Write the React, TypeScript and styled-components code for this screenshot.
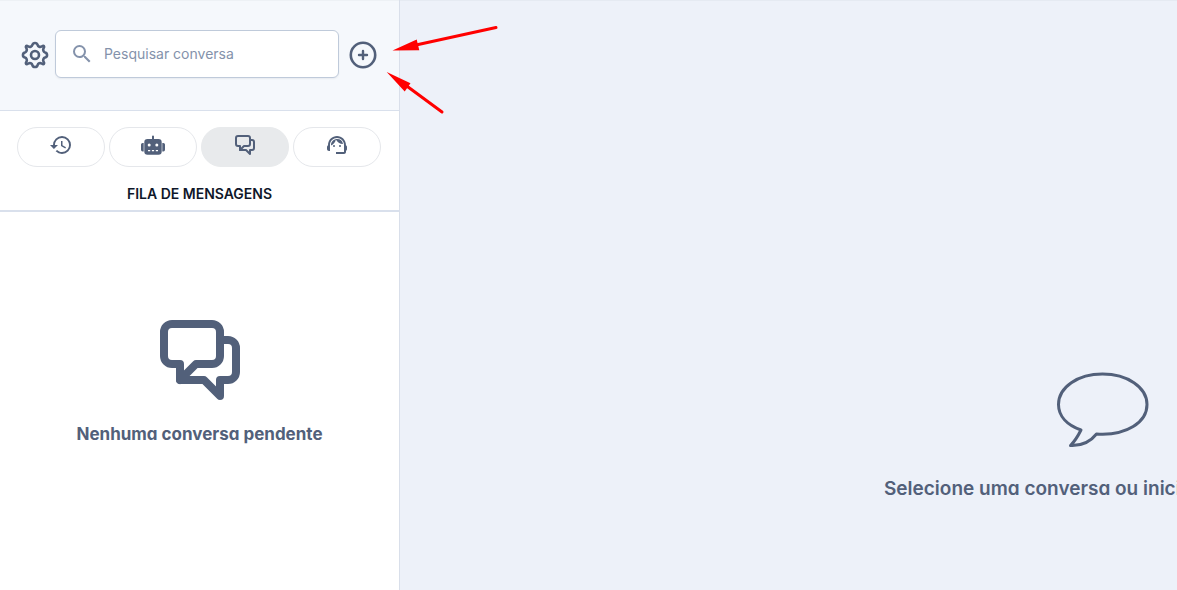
import React from "react";
import styled, { createGlobalStyle } from "styled-components";
import { MdSearch, MdHistory, MdOutlineSupportAgent } from "react-icons/md";

const GlobalStyle = createGlobalStyle`
  *, *::before, *::after { box-sizing: border-box; }
  body { margin: 0; font-family: Inter, "Liberation Sans", sans-serif; color: #0f172a; }
  button { font: inherit; cursor: pointer; }
`;

const Page = styled.div`
  display: flex;
  min-height: 100vh;
  overflow: hidden;
  position: relative;
`;

const Sidebar = styled.aside`
  flex: 0 0 400px;
  border-right: 1px solid #d9dfea;
  background: #fff;
  display: flex;
  flex-direction: column;
`;

const SearchHeader = styled.header`
  display: flex;
  align-items: center;
  padding: 30px 21px 32px 20px;
  background: #f5f8fc;
  border-bottom: 1px solid #d9e0ec;
  box-shadow: inset 0 1px 0 rgba(15, 23, 42, 0.03);
`;

const IconButton = styled.button`
  display: flex;
  padding: 2px 0 0;
  border: 0;
  background: none;
  color: #52607a;
`;

const SearchField = styled.label`
  flex: 1;
  min-width: 0;
  height: 48px;
  margin: 0 9px 0 5px;
  padding: 0 16px 0 14px;
  display: flex;
  align-items: center;
  gap: 10px;
  background: #fff;
  border: 1px solid #bfcada;
  border-radius: 6px;
  box-shadow: 0 1px 2px rgba(15, 23, 42, 0.06);
  color: #8492ab;
`;

const SearchInput = styled.input`
  flex: 1;
  min-width: 0;
  padding: 0;
  border: 0;
  outline: 0;
  background: none;
  font: 400 14px/20px Inter, "Liberation Sans", sans-serif;
  &::placeholder { color: #8492ab; opacity: 1; }
`;

const Filters = styled.nav`
  display: grid;
  grid-template-columns: repeat(4, 1fr);
  gap: 4px;
  padding: 16px 18px 0 17px;
`;

const FilterButton = styled.button<{ $active?: boolean }>`
  height: 40px;
  display: flex;
  justify-content: center;
  padding: 5px 0 0;
  border: 1px solid ${(p) => (p.$active ? "#e8eaec" : "#e5e7eb")};
  border-radius: 20px;
  background: ${(p) => (p.$active ? "#e8eaec" : "#fff")};
  color: #52607a;
`;

const QueueTitle = styled.h2`
  margin: 0;
  padding: 17px 0 6px;
  border-bottom: 2px solid #d9e0ec;
  text-align: center;
  font-size: 14px;
  line-height: 20px;
  font-weight: 600;
`;

const EmptyQueue = styled.section`
  display: flex;
  flex-direction: column;
  align-items: center;
  padding-top: 100px;
  color: #52607a;
`;

const Message = styled.p<{ $size: number; $weight: number }>`
  margin: 0;
  font-size: ${(p) => p.$size}px;
  line-height: 28px;
  font-weight: ${(p) => p.$weight};
  white-space: nowrap;
  font-feature-settings: "cv11";
`;

const QueueMessage = styled(Message)`
  margin-top: 12px;
`;

const Main = styled.main`
  flex: 1;
  min-width: 0;
  overflow: hidden;
  background: #edf1f9;
  box-shadow: inset 0 1px 0 rgba(15, 23, 42, 0.03);
  color: #52607a;
`;

const Placeholder = styled.section`
  width: max-content;
  display: flex;
  flex-direction: column;
  align-items: flex-start;
  margin: 370px 0 0 484px;
`;

const BubbleIcon = styled.svg`
  margin-left: 171px;
`;

const PlaceholderText = styled(Message)`
  margin-top: 25px;
`;

const Arrows = styled.svg`
  position: absolute;
  left: 380px;
  top: 15px;
  pointer-events: none;
`;

const Gear = () => (
  <svg width="30" height="30" viewBox="0 0 30 30" fill="none" stroke="currentColor" strokeWidth="2.6" strokeLinejoin="round">
    <path d="M12.4 4.9C13.1 2.3 16.9 2.3 17.6 4.9A2.7 2.7 0 0 0 21.6 6.5C23.9 5.1 25 6.2 23.5 8.5A2.7 2.7 0 0 0 25.1 12.4C27.7 13.1 27.7 16.9 25.1 17.6A2.7 2.7 0 0 0 23.5 21.5C25 23.8 23.9 24.9 21.6 23.5A2.7 2.7 0 0 0 17.6 25.1C16.9 27.7 13.1 27.7 12.4 25.1A2.7 2.7 0 0 0 8.4 23.5C6.1 24.9 5 23.8 6.5 21.5A2.7 2.7 0 0 0 4.9 17.6C2.3 16.9 2.3 13.1 4.9 12.4A2.7 2.7 0 0 0 6.5 8.5C5 6.2 6.1 5.1 8.4 6.5A2.7 2.7 0 0 0 12.4 4.9Z" />
    <circle cx="15" cy="15" r="4" />
  </svg>
);

const PlusCircle = () => (
  <svg width="30" height="30" viewBox="0 0 30 30" fill="none" stroke="currentColor" strokeWidth="2.6" strokeLinecap="round">
    <circle cx="15" cy="15" r="12.2" />
    <path d="M15 11v8M11 15h8" strokeWidth="2.4" />
  </svg>
);

const Robot = () => (
  <svg width="24" height="24" viewBox="0 0 24 24" fill="currentColor">
    <path d="M11 3.4a1 1 0 0 1 2 0V6h4.500a3.200 3.200 0 0 1 3.200 3.200v9.300a3.200 3.200 0 0 1-3.200 3.200h-11a3.200 3.200 0 0 1-3.200-3.200V9.200A3.200 3.200 0 0 1 6.500 6H11z" />
    <path d="M2.700 10v8.400H1.600A1.600 1.600 0 0 1 0 16.800v-5.200A1.600 1.600 0 0 1 1.600 10zM21.300 10h1.100a1.600 1.600 0 0 1 1.600 1.600v5.200a1.600 1.600 0 0 1-1.600 1.600h-1.100z" />
    <circle cx="8.200" cy="12" r="1.500" fill="#fff" />
    <circle cx="15.800" cy="12" r="1.500" fill="#fff" />
    <path d="M7 16.900h2.200v1.300H7zM10.900 16.900h2.200v1.300h-2.200zM14.800 16.900H17v1.300h-2.200z" fill="#fff" />
  </svg>
);

const Chats = ({ size }: { size: number }) => (
  <svg width={size} height={size} viewBox="0 0 24 24" fill="none" stroke="currentColor" strokeWidth="2" strokeLinecap="round" strokeLinejoin="round">
    <path d="M7 17v-4H5a2 2 0 0 1-2-2V5a2 2 0 0 1 2-2h10a2 2 0 0 1 2 2v6a2 2 0 0 1-2 2h-4z" />
    <path d="M17 7h2a2 2 0 0 1 2 2v6a2 2 0 0 1-2 2h-2v4l-4-4H7" />
  </svg>
);

export default function App() {
  return (
    <>
      <GlobalStyle />
      <Page>
        <Sidebar>
          <SearchHeader>
            <IconButton aria-label="Configurações"><Gear /></IconButton>
            <SearchField>
              <MdSearch size={24} />
              <SearchInput type="text" placeholder="Pesquisar conversa" aria-label="Pesquisar conversa" />
            </SearchField>
            <IconButton aria-label="Nova conversa"><PlusCircle /></IconButton>
          </SearchHeader>
          <Filters>
            <FilterButton aria-label="Histórico"><MdHistory size={24} /></FilterButton>
            <FilterButton aria-label="Robô"><Robot /></FilterButton>
            <FilterButton aria-label="Fila" aria-pressed="true" $active><Chats size={24} /></FilterButton>
            <FilterButton aria-label="Atendimento"><MdOutlineSupportAgent size={24} /></FilterButton>
          </Filters>
          <QueueTitle>FILA DE MENSAGENS</QueueTitle>
          <EmptyQueue>
            <Chats size={96} />
            <QueueMessage $size={17} $weight={700}>Nenhuma conversa pendente</QueueMessage>
          </EmptyQueue>
        </Sidebar>
        <Main>
          <Placeholder>
            <BubbleIcon width="96" height="80" viewBox="0 0 96 80" fill="none" stroke="currentColor" strokeWidth="3" strokeLinejoin="round">
              <path d="M26 60C12 55 3.5 46 3.5 34.5C3.5 17 23 4 47.5 4S92 17 92 34.5S72 66 41.5 64C36 71 27 76 15.5 75.5C20 71 23 66 26 60Z" />
            </BubbleIcon>
            <PlaceholderText $size={19} $weight={600}>Selecione uma conversa ou inicie uma nova</PlaceholderText>
          </Placeholder>
        </Main>
        <Arrows width="124" height="106" viewBox="0 0 124 106" fill="#f00" stroke="#f00" aria-hidden="true">
          <path d="M116 12.5L36 30M62 97L24 69" strokeWidth="3" strokeLinecap="round" />
          <path d="M12.5 35.5L36.7 24.5L39.3 35.2ZM6.7 57L30.5 68.3L24.7 76.5Z" stroke="none" />
        </Arrows>
      </Page>
    </>
  );
}
